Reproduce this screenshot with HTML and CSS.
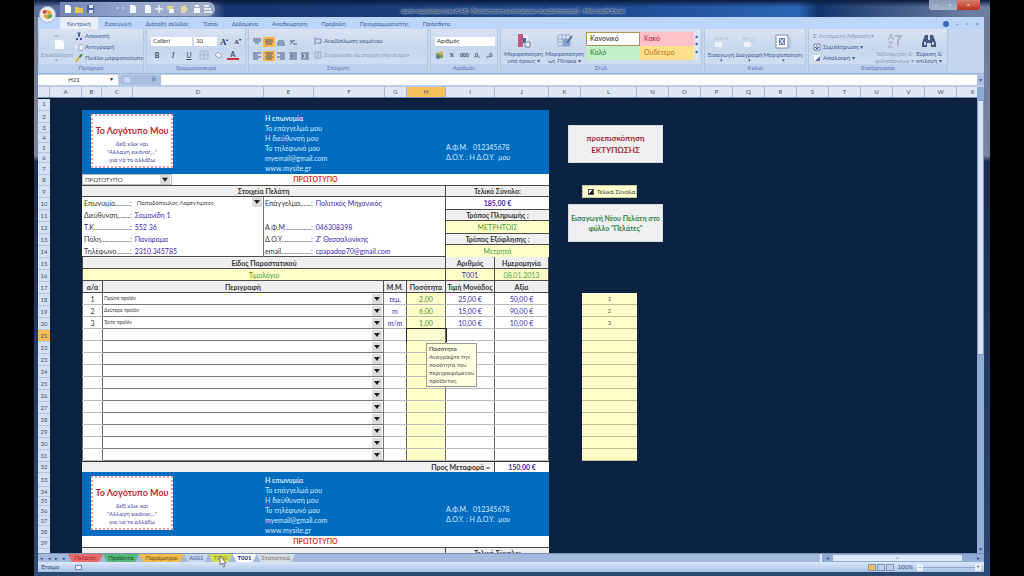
FILE: index.html
```html
<!DOCTYPE html>
<html lang="el">
<head>
<meta charset="utf-8">
<title>Microsoft Excel</title>
<link rel="stylesheet" href="styles.css">
</head>
<body>
<div class="window">
  <header class="titlebar">
    <button class="office" aria-label="Office">
      <svg viewBox="0 0 18 18"><circle cx="9" cy="9" r="8.5" fill="#e9edf3" stroke="#aab4c6"/><path d="M4 5l4-1v4H4z" fill="#d3402c"/><path d="M9 4l4 2v3H9z" fill="#ee9a35"/><path d="M5 9h4v5l-4-2z" fill="#e2a52d"/><path d="M9 9h5v3l-5 2z" fill="#6fa246"/></svg>
    </button>
    <div class="quick">
      <svg viewBox="0 0 150 12">
        <path d="M3 2h4l2 2v6H3z" fill="#fff"/>
        <path d="M13 4h3l1 1h4v5h-8z" fill="#e8c84f"/>
        <path d="M25 2h7v8h-7z" fill="#4a5f9f"/><path d="M27 2h4v3h-4zM27 7h4v3h-4z" fill="#dfe6f5"/>
        <path d="M54 5h3M60 5h2" stroke="#dbe6f8"/>
        <path d="M68 2h4l2 2v6h-6z" fill="#f4f7fc"/><path d="M83 2h4l2 2v6h-6z" fill="#f4f7fc"/>
        <path d="M97 2v8M93 6h8" stroke="#e8eefa" stroke-width="1.5"/>
        <path d="M105 3h6v3h-6z" fill="#e9d48b"/><path d="M107 6h5v4h-5z" fill="#f4f7fc"/>
        <path d="M119 4l4-2 3 4-3 4h-4z" fill="#e6d7a6"/>
        <path d="M132 5h6v5h-6zM133 2h4v2h-4z" fill="#f4f7fc"/>
        <path d="M142 3h5M142 6h7M142 9h8" stroke="#e0e8f6" stroke-width="2"/>
      </svg>
    </div>
    <h1 class="title">αυτο-τιμολόγιο (ver.8.48) &nbsp;[Κατάσταση λειτουργίας συμβατότητας] - Microsoft Excel</h1>
    <div class="controls"><button aria-label="Ελαχιστοποίηση">–</button><button aria-label="Επαναφορά">▫</button><button class="close" aria-label="Κλείσιμο">×</button></div>
  </header>

  <nav class="tabs">
    <button class="on">Κεντρική</button><button>Εισαγωγή</button><button>Διάταξη σελίδας</button><button>Τύποι</button><button>Δεδομένα</button><button>Αναθεώρηση</button><button>Προβολή</button><button>Προγραμματιστής</button><button>Πρόσθετα</button>
    <span class="tabtools"><i class="help"></i><span>–</span><span>▫</span><span>×</span></span>
  </nav>

  <section class="ribbon">
    <div class="group g-clip">
      <div class="body">
        <button class="big off"><svg viewBox="0 0 16 16"><path d="M3 3h9v10H3z" fill="#d4dceb"/><path d="M5 1h5v2H5z" fill="#b7c2d6"/><path d="M6 6h7l2 2v7H6z" fill="#f6f9fe"/></svg>Επικόλληση<small>▾</small></button>
        <div class="stack">
          <button><svg viewBox="0 0 8 8"><path d="M3 0l1 5M5 0L4 5" stroke="#43598c"/><path d="M1 7h2M5 7h2" stroke="#43598c" stroke-width="2"/></svg>Αποκοπή</button>
          <button><svg viewBox="0 0 8 8"><path d="M0 2h3v4H0z" fill="#dfe6f4"/><path d="M4 2h4v5H4z" fill="#fff" stroke="#7c8fb8" stroke-width=".7"/></svg>Αντιγραφή</button>
          <button><svg viewBox="0 0 8 8"><path d="M7 0L4 4" stroke="#3f8a3f" stroke-width="2"/><path d="M4 3L1 8" stroke="#d8b03c" stroke-width="2"/></svg>Πινέλο μορφοποίησης</button>
        </div>
      </div>
      <h2>Πρόχειρο</h2>
    </div>
    <div class="group g-font">
      <div class="body rows">
        <div class="line"><select class="fontname" aria-label="Γραμματοσειρά"><option>Calibri</option></select><select class="fontsize" aria-label="Μέγεθος"><option>10</option></select><b class="ic serif">A<sup>▴</sup></b><b class="ic serif small">A<sup>▾</sup></b></div>
        <div class="line"><b class="ic">B</b><i class="ic serif">I</i><u class="ic">U</u>
          <svg class="ico" viewBox="0 0 10 10"><path d="M1 1h8v8H1zM5 1v8M1 5h8" fill="none" stroke="#aab6cf"/></svg>
          <svg class="ico" viewBox="0 0 10 10"><path d="M2 5l3-3 4 4-3 2z" fill="#f6f8fc" stroke="#8090b4" stroke-width=".8"/></svg>
          <b class="ic under">A</b></div>
      </div>
      <h2>Γραμματοσειρά</h2>
    </div>
    <div class="group g-align">
      <div class="body">
        <div class="aligns">
          <svg viewBox="0 0 8 8"><path d="M0 1h8M0 3h8M2 5h4"/></svg><svg class="hot" viewBox="0 0 8 8"><path d="M0 2h8M0 4h8M1 6h6"/></svg><svg viewBox="0 0 8 8"><path d="M1 3h6M0 5h8M0 7h8"/></svg><svg viewBox="0 0 8 8"><path d="M1 6l5-4M1 3h3M4 6h4"/></svg><span></span>
          <svg viewBox="0 0 8 8"><path d="M0 1h8M0 3h5M0 5h8M0 7h5"/></svg><svg class="hot" viewBox="0 0 8 8"><path d="M0 1h8M1 3h6M0 5h8M1 7h6"/></svg><svg viewBox="0 0 8 8"><path d="M0 1h8M3 3h5M0 5h8M3 7h5"/></svg><svg viewBox="0 0 8 8"><path d="M0 1h8M4 3h4M4 5h4M0 7h8M3 2v4l-2-2z"/></svg><svg viewBox="0 0 8 8"><path d="M0 1h8M4 3h4M4 5h4M0 7h8M1 2v4l2-2z"/></svg>
        </div>
        <div class="wraps">
          <button><svg viewBox="0 0 8 8"><path d="M1 0v8M2 2h5v4H3" fill="none" stroke="#7786a8"/></svg>Αναδίπλωση κειμένου</button>
          <button class="off"><svg viewBox="0 0 8 8"><path d="M1 1h6v6H1zM4 2v4" fill="none" stroke="#98a5c0"/></svg>Συγχώνευση και στοίχιση στο κέντρο ▾</button>
        </div>
      </div>
      <h2>Στοίχιση</h2>
    </div>
    <div class="group g-num">
      <div class="body rows">
        <div class="line"><select class="numfmt" aria-label="Μορφή αριθμού"><option>Αριθμός</option></select></div>
        <div class="line nums"><svg class="ico" viewBox="0 0 10 10"><path d="M1 3h7v5H1z" fill="#71a25c"/><circle cx="6" cy="3" r="2" fill="#d0b456"/><circle cx="3" cy="7" r="2" fill="#657698"/></svg><b class="ic">%</b><b class="ic">000</b><b class="ic">,0₀</b><b class="ic">₀,0</b></div>
      </div>
      <h2>Αριθμός</h2>
    </div>
    <div class="group g-style">
      <div class="body">
        <button class="big"><svg viewBox="0 0 16 16"><path d="M2 1h5v13H2z" fill="#c2577e"/><path d="M8 2h4v10H8z" fill="#e9edf7"/><path d="M7 5h3v5H7z" fill="#4f64a4"/><path d="M9 9h5v5H9z" fill="#e9eef6" stroke="#7280a0"/></svg>Μορφοποίηση<br>υπό όρους ▾</button>
        <button class="big"><svg viewBox="0 0 16 16"><path d="M1 2h12v11H1z" fill="#dbe4f3" stroke="#9aa9c8"/><path d="M1 6h12M1 9h12M5 2v11M9 2v11" stroke="#9aa9c8"/><path d="M6 6h7v7H6z" fill="#7ea0d6"/><path d="M15 3l-5 7" stroke="#5e708f" stroke-width="2"/></svg>Μορφοποίηση<br>ως Πίνακα ▾</button>
        <div class="gallery"><span class="normal">Κανονικό</span><span class="bad">Κακό</span><span class="good">Καλό</span><span class="neutral">Ουδέτερο</span></div>
        <div class="arrows"><span>▴</span><span>▾</span><span>▾</span></div>
      </div>
      <h2>Στυλ</h2>
    </div>
    <div class="group g-cells">
      <div class="body">
        <button class="big"><svg viewBox="0 0 16 16"><path d="M1 3h4v3H1zM6 3h4v3H6zM11 3h4v3h-4z" fill="#c3cddd"/><path d="M2 8h7v5H2z" fill="#eef2f9"/></svg>Εισαγωγή<small>▾</small></button>
        <button class="big"><svg viewBox="0 0 16 16"><path d="M2 3h5v3H2z" fill="#c3cddd"/><path d="M3 8h7v5H3z" fill="#eef2f9"/><path d="M8 3l6 6M14 3L8 9" stroke="#bcc5d6"/></svg>Διαγραφή<small>▾</small></button>
        <button class="big"><svg viewBox="0 0 16 16"><path d="M1 1h12v13H1z" fill="#fff" stroke="#7a8cb3"/><path d="M4 4h6v7H4z" fill="#617fc0"/><path d="M5 5l4 5M9 5l-4 5" stroke="#fff"/><path d="M15 3v11" stroke="#aab6cf"/></svg>Μορφοποίηση<small>▾</small></button>
      </div>
      <h2>Κελιά</h2>
    </div>
    <div class="group g-edit">
      <div class="body">
        <div class="stack">
          <button class="off"><b>Σ</b>Αυτόματη Άθροιση ▾</button>
          <button><svg viewBox="0 0 8 8"><path d="M1 1h6v6H1z" fill="#fff" stroke="#66789f"/><path d="M4 2v4L2 4M4 6l2-2" stroke="#345398" fill="none"/></svg>Συμπλήρωση ▾</button>
          <button><svg viewBox="0 0 8 8"><path d="M1 1h6v6H1z" fill="#fff"/><path d="M2 7l5-5v5z" fill="#66789f"/></svg>Απαλοιφή ▾</button>
        </div>
        <button class="big off"><svg viewBox="0 0 16 16"><path d="M2 7l3-6 3 6M3 5h4M2 9h5l-5 5h5" fill="none" stroke="#a4abb9"/><path d="M9 3h6l-3 4v6" fill="none" stroke="#a4abb9" stroke-width="1.5"/></svg>Ταξινόμηση &amp;<br>φιλτράρισμα ▾</button>
        <button class="big"><svg viewBox="0 0 16 16"><path d="M4 2h3v5h2V2h3l3 8v4h-5v-4H6v4H1v-4z" fill="#46577e"/><path d="M3 9h2v3H3zM11 9h2v3h-2z" fill="#c6d2e8"/></svg>Εύρεση &amp;<br>επιλογή ▾</button>
      </div>
      <h2>Επεξεργασία</h2>
    </div>
  </section>

  <div class="formula"><input class="namebox" value="H21" aria-label="Πλαίσιο ονόματος"><span class="drop">▾</span><span class="fx"><i></i><em>fx</em></span><input class="formulabox" aria-label="Γραμμή τύπων"><button class="expand" aria-label="Ανάπτυξη">▾</button></div>

  <main class="book">
    <div class="colheads" id="cols"></div>
    <div class="sheet">
      <div class="rowheads" id="rowheads"></div>
      <article class="invoice">
        <div class="company">
          <div class="logo"><strong>Το Λογότυπο Μου</strong><span>δεξί κλικ και<br>"Αλλαγή εικόνας..."<br>για να το αλλάξω</span></div>
          <address><b>Η επωνυμία</b><br>Το επάγγελμά μου<br>Η διεύθυνσή μου<br>Το τηλέφωνό μου<br>myemail@gmail.com<br>www.mysite.gr</address>
          <p class="tax">Α.Φ.Μ. &nbsp; 012345678<br>Δ.Ο.Υ. : Η Δ.Ο.Υ. &nbsp;μου</p>
        </div>
        <div class="copy"><select aria-label="Αντίγραφο"><option>ΠΡΩΤΟΤΥΠΟ</option></select><strong>ΠΡΩΤΟΤΥΠΟ</strong></div>
        <div class="parties">
          <section class="client">
            <h3>Στοιχεία Πελάτη</h3>
            <div class="fields">
              <dl>
                <dt>Επωνυμία</dt><dd><select aria-label="Επωνυμία"><option>Παπαδόπουλος Λαρέντιμπος</option></select></dd>
                <dt>Διεύθυνση</dt><dd>Σαμανίδη 1</dd>
                <dt>Τ.Κ.</dt><dd>552 36</dd>
                <dt>Πόλη</dt><dd>Πανόραμα</dd>
                <dt>Τηλέφωνο</dt><dd>2310.345785</dd>
              </dl>
              <dl>
                <dt>Επάγγελμα</dt><dd>Πολιτικός Μηχανικός</dd>
                <dt class="blank"></dt><dd></dd>
                <dt>Α.Φ.Μ.</dt><dd>046308398</dd>
                <dt>Δ.Ο.Υ.</dt><dd>Ζ' Θεσσαλονίκης</dd>
                <dt>email</dt><dd>cpapadop70@gmail.com</dd>
              </dl>
            </div>
          </section>
          <section class="totals">
            <h3>Τελικό Σύνολο:</h3><p class="sum">185,00 €</p>
            <h3>Τρόπος Πληρωμής :</h3><p>ΜΕΤΡΗΤΟΙΣ</p>
            <h3>Τρόπος Εξόφλησης :</h3><p>Μετρητά</p>
          </section>
        </div>
        <table class="doc">
          <colgroup><col class="w-kind"><col class="w-price"><col class="w-value"></colgroup>
          <tr><th>Είδος Παραστατικού</th><th>Αριθμός</th><th>Ημερομηνία</th></tr>
          <tr><td>Τιμολόγιο</td><td class="blue">Τ001</td><td>08.01.2013</td></tr>
        </table>
        <table class="items">
          <colgroup><col class="w-no"><col class="w-desc"><col class="w-unit"><col class="w-qty"><col class="w-price"><col class="w-value"></colgroup>
          <thead><tr><th>α/α</th><th>Περιγραφή</th><th>Μ.Μ.</th><th>Ποσότητα</th><th>Τιμή Μονάδος</th><th>Αξία</th></tr></thead>
          <tbody id="items"></tbody>
        </table>
        <div class="carry"><b>Προς Μεταφορά =</b><span>150,00 €</span></div>
        <div class="company">
          <div class="logo"><strong>Το Λογότυπο Μου</strong><span>δεξί κλικ και<br>"Αλλαγή εικόνας..."<br>για να το αλλάξω</span></div>
          <address><b>Η επωνυμία</b><br>Το επάγγελμά μου<br>Η διεύθυνσή μου<br>Το τηλέφωνό μου<br>myemail@gmail.com<br>www.mysite.gr</address>
          <p class="tax">Α.Φ.Μ. &nbsp; 012345678<br>Δ.Ο.Υ. : Η Δ.Ο.Υ. &nbsp;μου</p>
        </div>
        <div class="copy"><span></span><strong>ΠΡΩΤΟΤΥΠΟ</strong></div>
        <div class="parties"><section class="client"><h3></h3></section><section class="totals"><h3>Τελικό Σύνολο:</h3></section></div>
      </article>
      <aside class="side">
        <button class="act preview">προεπισκόπηση<br>ΕΚΤΥΠΩΣΗΣ</button>
        <label class="check"><input type="checkbox" checked>Τελικά Σύνολα</label>
        <button class="act add">Εισαγωγή Νέου Πελάτη στο<br>φύλλο "Πελάτες"</button>
        <ol class="index" id="index"></ol>
      </aside>
    </div>
    <div class="vscroll"><span class="thumb"></span><span>▾</span></div>
  </main>

  <footer class="sheettabs">
    <span class="navs"><span>◂</span><span>◂</span><span>▸</span><span>▸</span></span>
    <button class="red">Πελάτες</button><button class="green">Προϊόντα</button><button class="orange">Παράμετροι</button><button>Α001</button><button class="yellow">Τ000</button><button class="current">Τ001</button><button class="grey">Στατιστικά</button>
    <div class="hscroll"><span>◂</span><span class="bar">ııı</span><span>▸</span></div>
    <svg class="cursor" viewBox="0 0 8 12"><path d="M1 0v9l2-2 1.500 4 1.500-1-1.500-3H7z" fill="#fff" stroke="#333" stroke-width=".6"/></svg>
  </footer>
  <div class="status"><span>Έτοιμο</span><i class="macro"></i><span class="views"><i class="sel"></i><i></i><i></i></span><span class="pct">100%</span><button aria-label="Σμίκρυνση">−</button><span class="track"></span><button aria-label="Μεγέθυνση">+</button></div>
</div>
<script src="sheet.js"></script>
</body>
</html>
```
FILE: styles.css
```css
* { box-sizing: border-box; }
body { margin: 0; background: #000; font: 6px/8px Lato, "Open Sans", sans-serif; color: #3f5c9a; }
button, input, select { font: inherit; color: inherit; border: 0; padding: 0; margin: 0; background: none; border-radius: 0; }
select { appearance: none; }
h1, h2, h3, p, dl, dd, ol { margin: 0; padding: 0; font-size: inherit; }
svg { display: block; flex: none; }

.window { position: relative; height: 100vh; margin: 0 34px; padding: 0 6px 4px 4px; display: flex; flex-direction: column; overflow: hidden; background: linear-gradient(#6f7891, #7a84a0 27%, #1c2b50 28%, #2b4a72); }
.window > * { flex: none; }

.titlebar { display: flex; align-items: center; height: 17px; margin: 0 -6px 0 -4px; padding-left: 5px; background: linear-gradient(180deg, #0a1b3e, transparent 40%), linear-gradient(90deg, #5a6c9a, #6b7ca9 18%, #17366f 20%, #1b3e7b 40%, #1f4c92 62%, #2c66b4 80%, #12356b 82%, #6c7fa2 98%); }
.office { width: 17px; height: 17px; position: relative; z-index: 2; top: 6px; }
.quick { margin-left: 4px; width: 155px; height: 14px; padding: 1px 2px; border-radius: 0 7px 7px 0; background: linear-gradient(90deg, #7286b8, #98a9cd 50%, #a4afc6); }
.quick svg { width: 150px; height: 12px; }
.title { flex: 1; text-align: center; font-size: 6px; font-weight: 400; color: #152546; padding-top: 4px; padding-right: 118px; white-space: nowrap; }
.title { text-shadow: 0 0 2px #b4c6e2, 0 0 2px #b4c6e2, 0 0 3px #9fb4d6, 0 0 4px #9fb4d6; }
.controls { display: flex; align-self: flex-start; margin-right: 10px; border-radius: 0 0 3px 3px; overflow: hidden; }
.controls button { width: 14px; height: 10px; background: linear-gradient(#8a9bb8, #a7b3c8); color: #fff; line-height: 8px; }
.controls .close { width: 23px; background: linear-gradient(#d9806f, #be2f1d); }

.tabs { display: flex; height: 12px; padding-left: 22px; background: #bcd6f8; }
.tabs button { padding: 1px 7px 0; white-space: nowrap; }
.tabs .on { background: #e8eff9; border-radius: 2px 2px 0 0; }
.tabtools { margin-left: auto; display: flex; gap: 7px; padding: 1px 5px 0 0; align-items: center; }
.help { width: 6px; height: 6px; border-radius: 50%; background: #3868b4; }

.ribbon { display: flex; gap: 2px; height: 45px; background: #c5d7ef; border-bottom: 1px solid #9db5d8; }
.group { display: flex; flex-direction: column; flex: none; border: 1px solid #b5c6df; border-width: 0 1px; background: linear-gradient(#d9e3f2, #c7d7ec 45%, #d3e1f3); overflow: hidden; }
.group h2 { height: 9px; font-weight: 400; text-align: center; color: #5e7ab0; background: #bed1ec; line-height: 8px; white-space: nowrap; }
.body { flex: 1; display: flex; padding: 3px 2px 0; min-height: 0; }
.rows { flex-direction: column; gap: 2px; padding-top: 6px; padding-left: 4px; }
.g-clip { width: 106px; } .g-font { width: 100px; } .g-align { width: 180px; } .g-num { width: 68px; }
.g-style { width: 202px; } .g-cells { width: 102px; } .g-edit { width: 140px; }
.big { display: block; line-height: 7px; white-space: nowrap; flex: none; text-align: center; }
.big svg { width: 16px; height: 16px; margin: 0 auto 1px; }
.big small { display: block; font-size: 5px; line-height: 5px; }
.off { color: #8d9cbb; }
.stack { display: flex; flex-direction: column; gap: 3px; padding-left: 2px; }
.stack button, .wraps button { display: flex; gap: 2px; align-items: center; height: 8px; white-space: nowrap; }
.stack svg, .wraps svg { width: 8px; height: 8px; }
.line { display: flex; align-items: center; height: 12px; gap: 2px; }
.line select { background: #fff; height: 9px; padding-left: 2px; color: #333; }
.fontname { width: 44px; } .fontsize { width: 24px; }
.ic { width: 12px; text-align: center; color: #34435f; font-size: 7px; }
.ic sup { font-size: 4px; }
.serif { font-family: "Liberation Serif", serif; font-size: 9px; }
.small { font-size: 7px; }
.under { border-bottom: 2px solid #c33; line-height: 7px; }
.g-font .line + .line { gap: 4px; }
.ico { width: 10px; height: 10px; }
.aligns { display: grid; grid-template-columns: repeat(5, 12px); grid-auto-rows: 12px; gap: 2px 0; padding: 5px 0 0; }
.aligns svg { width: 12px; height: 10px; padding: 1px 2px; stroke: #4a5d87; fill: none; stroke-width: 1; }
.aligns .hot { background: #f6b544; }
.wraps { display: flex; flex-direction: column; gap: 6px; padding: 5px 0 0 3px; }
.wraps .off { font-size: 5px; }
.numfmt { width: 60px; }
.nums { gap: 1px; }
.nums .ic { font-size: 5px; width: 12px; }
.g-style .big { width: 41px; }
.gallery { flex: none; display: grid; grid-template-columns: 54px 54px; grid-auto-rows: 14px; background: #fff; margin-left: 1px; width: 108px; height: 28px; overflow: hidden; }
.gallery span { padding: 2px 4px; font-size: 7px; }
.gallery .normal { border: 1px solid #b4935b; padding: 1px 3px; color: #222; background: #fff; }
.gallery .bad { background: #ffc2c9; color: #b3203a; } .gallery .good { background: #c3efc6; color: #237a2f; } .gallery .neutral { background: #ffe08a; color: #b5741c; }
.arrows { display: flex; flex-direction: column; width: 7px; text-align: center; background: #dce6f4; height: 28px; }
.g-cells .big { width: 28px; } .g-cells .big:last-child { width: 40px; }
.g-edit .stack { width: 64px; flex: none; }
.g-edit .big { width: 38px; } .g-edit .big:last-child { width: 32px; }

.formula { display: flex; height: 13px; padding: 1px 0 2px; background: #b9cdea; }
.namebox { width: 72px; background: #fff; text-align: center; color: #333; }
.drop { width: 8px; background: #fff; color: #333; }
.fx { display: flex; justify-content: space-between; width: 42px; margin-left: 1px; padding: 0 5px; background: #a9bfdf; border-radius: 5px 0 0 5px; font-family: "Liberation Serif", serif; }
.fx i { width: 6px; height: 6px; margin-top: 2px; border-radius: 50%; background: #cddaf0; }
.formulabox { flex: 1; background: #fff; }
.expand { width: 7px; background: #a7bfe4; }

.window > .book { flex: 1 1 0; min-height: 0; display: grid; grid-template: 11px 1fr / 1fr 7px; background: #0b2340; }
.colheads { display: flex; overflow: hidden; background: #dfe7f2; border-bottom: 1px solid #6f96c8; }
.colheads span { flex: none; text-align: center; border-right: 1px solid #a9b9d0; color: #45536b; line-height: 10px; }
.colheads .hot { background: #f5c15b; }
.sheet { grid-row: 2; display: flex; overflow: hidden; min-height: 0; border-top: 1px solid #06152b; }
.rowheads { flex: none; width: 12px; margin-right: 32px; margin-top: -1px; background: #d3e1f2; }
.rowheads span { display: flex; align-items: center; justify-content: center; border-bottom: 1px solid #b4c6df; color: #45536b; }
.rowheads .hot { background: #f7be5c; }
.vscroll { grid-column: 2; grid-row: 1 / 3; display: flex; flex-direction: column; justify-content: space-between; background: #8fabd7; text-align: center; padding-top: 13px; }
.thumb { height: 255px; background: #dbe3f6; border: 1px solid #7f9ac6; }

.invoice { flex: none; width: 467px; margin-top: 11px; font-size: 7px; color: #333; align-self: flex-start; background: #fff; }
.company { display: flex; height: 64px; padding: 3px 0 0 9px; background: #006cc0; color: #d6eaff; }
.logo { width: 82px; height: 54px; margin-top: 1px; padding-top: 9px; background: #fff; border: 2px dotted #ef9aa8; text-align: center; color: #4c50a8; font-size: 6px; line-height: 8px; }
.logo strong { display: block; color: #c2262e; font-size: 9px; line-height: 12px; white-space: nowrap; margin: 0 -2px 3px; }
.logo span { display: block; }
.company address { width: 181px; margin-left: 92px; font-style: normal; line-height: 10px; }
.tax { padding-top: 29px; line-height: 10px; white-space: nowrap; }
.copy { display: grid; grid-template-columns: 90px 1fr 90px; height: 11px; text-align: center; line-height: 11px; }
.copy strong { color: #d33; }
.copy select, .fields select, .items select { width: 100%; height: 10px; padding: 0 2px; font-size: 6px; line-height: 9px; color: #444; background: #fff url("data:image/svg+xml,%3Csvg xmlns='http://www.w3.org/2000/svg' width='10' height='10'%3E%3Cpath d='M0 0h10v10H0z' fill='%23dcdcdc'/%3E%3Cpath d='M2 3h6L5 7z' fill='%23222'/%3E%3C/svg%3E") no-repeat right 1px center; }
.copy select { border: 1px solid #bbb; height: 11px; }
.parties { display: grid; grid-template-columns: 363px 1fr; }
h3, th { height: 12px; font-weight: 700; line-height: 10px; text-align: center; background: #efefef; border: 1px solid #4b4b4b; border-width: 1px 0; color: #333; }
.totals { border-left: 1px solid #4b4b4b; }
.totals p { height: 12px; line-height: 12px; text-align: center; background: #ffffc8; color: #3f9a48; }
.totals .sum { background: #fff; color: #3a28b4; font-weight: 700; }
.fields { display: grid; grid-template-columns: 181px 1fr; }
.fields dl { display: grid; grid-template-columns: 46px 1fr; grid-auto-rows: 12px; line-height: 12px; padding-left: 2px; }
.fields dl + dl { border-left: 1px solid #777; padding-left: 1px; }
.fields dt { display: flex; white-space: nowrap; overflow: hidden; }
.fields dt::after { content: "............................"; flex: 1; overflow: hidden; }
.fields dd { display: flex; gap: 3px; color: #3a28b4; white-space: nowrap; }
.fields dd::before { content: ":"; color: #333; }
.fields .blank, .fields .blank + dd { visibility: hidden; }
table { width: 100%; margin-top: -1px; border-collapse: collapse; table-layout: fixed; }
th, td { padding: 0; overflow: hidden; white-space: nowrap; }
.w-price { width: 49px; } .w-value { width: 54px; } .w-no { width: 20px; } .w-unit { width: 23px; } .w-qty { width: 39px; }
.doc th, .items th { border: 1px solid #4b4b4b; }
.doc td, .items td { height: 12px; line-height: 10px; text-align: center; border: 1px solid #bbb; }
.doc td { background: #ffffc8; color: #3f9a48; border-color: #4b4b4b; }
.items td { border-left-color: #666; border-right-color: #666; color: #3a28b4; }
.items td:nth-child(1) { color: #333; }
.items td:nth-child(2) { text-align: left; border-color: #777; }
.items td:nth-child(4) { background: #ffffc8; color: #4b8a3c; position: relative; overflow: visible; }
.items select { display: block; font-size: 5px; padding: 0 1px; }
.doc .blue { color: #3a28b4; }
.items td.active { outline: 1px solid #222; background: #fbfbd0; }
.tip { position: absolute; z-index: 3; left: 19px; top: 14px; width: 51px; padding: 1px 2px; background: #ffffe1; border: 1px solid #999; color: #555; font-size: 6px; line-height: 8px; text-align: left; white-space: normal; }
.tip b { display: block; }
.carry { display: grid; grid-template-columns: 413px 1fr; height: 11px; line-height: 10px; background: #f0f0f0; border-top: 1px solid #333; }
.carry b { text-align: right; padding-right: 4px; border-right: 1px solid #444; }
.carry span { text-align: center; color: #3a28b4; font-weight: 700; background: #fff; }

.side { padding: 26px 0 0 19px; display: flex; flex-direction: column; align-items: flex-start; }
.act { width: 95px; height: 38px; background: #f0f0f2; border: 1px solid #d5dbe4; font-weight: 700; line-height: 12px; font-size: 8px; white-space: nowrap; }
.preview { color: #a31f31; }
.add { color: #2f8243; font-size: 7px; line-height: 10px; }
.check { display: flex; align-items: center; gap: 3px; margin: 22px 0 6px 14px; width: 55px; height: 13px; padding-left: 5px; background: #ffffd0; border: 1px solid #c9c9a0; color: #444; font-size: 6px; white-space: nowrap; }
.check input { appearance: none; width: 6px; height: 6px; border: 1px solid #555; background: #fff linear-gradient(135deg, transparent 45%, #222 45%); }
.index { list-style: none; margin: 51px 0 0 14px; width: 55px; background: #ffffc8; color: #555; font-size: 6px; }
.index li { height: 12px; line-height: 12px; text-align: center; border-bottom: 1px solid #c0bf96; }

.sheettabs { position: relative; display: flex; height: 9px; background: #a3badd; align-items: center; border-top: 1px solid #7991b8; }
.navs { display: flex; justify-content: space-around; width: 30px; font-size: 5px; line-height: 7px; color: #2c4170; }
.sheettabs button { height: 8px; line-height: 8px; padding: 0 5px; background: #c6d6ee; clip-path: polygon(0 0, 100% 0, calc(100% - 4px) 100%, 4px 100%); }
.sheettabs .red { background: #e86b6b; color: #a31f31; width: 35px; } .sheettabs .green { background: #58b87a; color: #134f2c; width: 36px; } .sheettabs .orange { background: #f1bd4d; color: #6b4717; width: 45px; }
.sheettabs .yellow { background: #d9dd52; color: #7b8f2a; } .sheettabs .current { background: #fff; color: #222a78; font-weight: 700; } .sheettabs .grey { background: #d8dce2; color: #777; }
.hscroll { display: flex; margin-left: auto; width: 164px; height: 8px; padding: 0 4px; background: #90abd6; border-left: 2px solid #e6eefb; }
.hscroll .bar { flex: 1; margin: 1px 15px 1px 4px; background: #dfe9f8; text-align: center; font-size: 4px; line-height: 5px; color: #6a83b4; }
.cursor { position: absolute; left: 181px; top: 2px; width: 8px; height: 12px; z-index: 4; }
.status { display: flex; align-items: center; height: 10px; padding: 0 3px; background: linear-gradient(#dce8fa, #a9c2e8); color: #33476f; }
.macro { width: 7px; height: 5px; margin-left: 16px; background: #f4f8ff; border: 1px solid #7489b0; }
.views { display: flex; gap: 1px; margin-left: auto; }
.views i { width: 8px; height: 7px; background: #c2cfe4; border: 1px solid #8194b6; }
.views .sel { background: #f6c15a; }
.pct { margin: 0 4px; }
.status button { width: 6px; height: 7px; line-height: 6px; background: #eef4fd; }
.track { width: 52px; height: 1px; background: #8fa5c9; }
```
FILE: sheet.js
```js
const add = (parent, tag, text, cls) => {
  const el = document.createElement(tag);
  el.textContent = text;
  if (cls) el.className = cls;
  parent.append(el);
  return el;
};

const columns = [["", 12], ["A", 32], ["B", 20], ["C", 31], ["D", 131], ["E", 50], ["F", 71], ["G", 22], ["H", 39], ["I", 49], ["J", 54], ["K", 32], ["L", 56],
  ..."NOPQRSTUVWX".split("").map(c => [c, 32])];
const cols = document.getElementById("cols");
for (const [name, width] of columns) add(cols, "span", name, name === "H" ? "hot" : "").style.width = width + "px";

const special = { 1: 13, 2: 12, 3: 10, 4: 10, 5: 10, 6: 10, 7: 12, 8: 11, 32: 11, 33: 14, 34: 10, 35: 9, 36: 10, 37: 10, 38: 12, 39: 11 };
const heads = document.getElementById("rowheads");
for (let r = 1; r <= 39; r++) add(heads, "span", r, r === 21 ? "hot" : "").style.height = (special[r] || 12) + "px";

const items = [["Πρώτο προϊόν", "τεμ.", "2,00", "25,00 €", "50,00 €"], ["Δεύτερο προϊόν", "m", "6,00", "15,00 €", "90,00 €"], ["Τρίτο προϊόν", "m/m", "1,00", "10,00 €", "10,00 €"]];
const body = document.getElementById("items");
const index = document.getElementById("index");
for (let i = 0; i < 14; i++) {
  const item = items[i] || ["", "", "", "", ""];
  const row = add(body, "tr", "");
  add(row, "td", items[i] ? i + 1 : "");
  const select = add(add(row, "td", ""), "select", "");
  select.setAttribute("aria-label", "Περιγραφή " + (i + 1));
  add(select, "option", item[0]);
  item.slice(1).forEach(text => add(row, "td", text));
  add(index, "li", items[i] ? i + 1 : "");
}
const active = body.rows[3].cells[3];
active.className = "active";
const tip = add(active, "div", "", "tip");
add(tip, "b", "Ποσότητα");
tip.append("Αναγράψτε την ποσότητα του περιγραφόμενου προϊόντος.");
```
